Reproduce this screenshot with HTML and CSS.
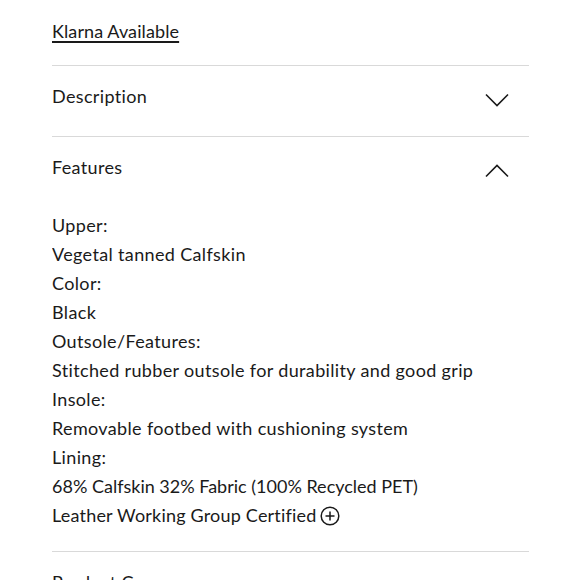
FILE: index.html
```html
<!DOCTYPE html>
<html>
<head>
<meta charset="utf-8">
<link rel="stylesheet" href="styles.css">
</head>
<body>
<div class="page">
  <div class="klarna"><a href="#">Klarna Available</a></div>
  <div class="section">
    <div class="head">
      <span>Description</span>
      <svg class="chev" width="24" height="14" viewBox="0 0 24 14"><polyline points="1,1.5 12,12.5 23,1.5" fill="none" stroke="#1a1a1a" stroke-width="1.6"/></svg>
    </div>
  </div>
  <div class="section">
    <div class="head">
      <span>Features</span>
      <svg class="chev" width="24" height="14" viewBox="0 0 24 14"><polyline points="1,12.5 12,1.5 23,12.5" fill="none" stroke="#1a1a1a" stroke-width="1.6"/></svg>
    </div>
    <div class="body">
      <div>Upper:</div>
      <div>Vegetal tanned Calfskin</div>
      <div>Color:</div>
      <div>Black</div>
      <div>Outsole/Features:</div>
      <div>Stitched rubber outsole for durability and good grip</div>
      <div>Insole:</div>
      <div>Removable footbed with cushioning system</div>
      <div>Lining:</div>
      <div class="tight">68% Calfskin 32% Fabric (100% Recycled PET)</div>
      <div class="cert">Leather Working Group Certified <svg class="plus" width="20" height="20" viewBox="0 0 20 20"><circle cx="10" cy="10" r="8.8" fill="none" stroke="#1a1a1a" stroke-width="1.5"/><path d="M10 5.5V14.5M5.5 10H14.5" stroke="#1a1a1a" stroke-width="1.5"/></svg></div>
    </div>
  </div>
  <div class="section">
    <div class="head"><span>Product Care</span></div>
  </div>
</div>
</body>
</html>
```
FILE: styles.css
```css
html, body { margin: 0; padding: 0; background: #fff; }
body {
  font-family: "Lato", "Noto Sans", sans-serif;
  color: #1a1a1a;
  font-size: 18px;
  letter-spacing: 0.35px;
}
.page {
  width: 477px;
  margin-left: 52px;
  overflow: hidden;
  height: 580px;
}
.klarna {
  height: 65px;
  line-height: 26px;
  padding-top: 18px;
  box-sizing: border-box;
  letter-spacing: 0.1px;
}
.klarna a { color: #1a1a1a; text-decoration: underline; text-underline-offset: 3px; text-decoration-thickness: 1.5px; }
.section { border-top: 1px solid #d9d9d9; }
.head {
  display: flex;
  justify-content: space-between;
  align-items: center;
  height: 70px;
  line-height: 26px;
  padding-bottom: 11px;
  box-sizing: border-box;
}
.chev { margin-right: 20px; margin-top: 9px; }
.body {
  line-height: 29px;
  padding-top: 4px;
  padding-bottom: 21px;
}
.tight { letter-spacing: 0; }
.cert { display: flex; align-items: center; gap: 3px; letter-spacing: 0.2px; }
.plus { margin-top: 1px; }
```
